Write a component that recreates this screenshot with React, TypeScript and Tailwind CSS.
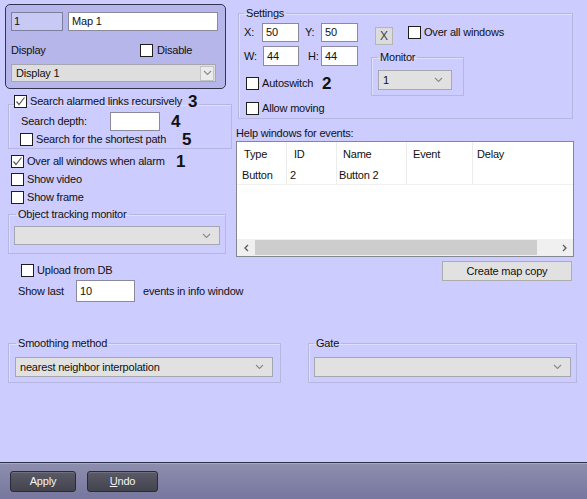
import * as React from "react";

const Chevron = () => (
    <svg width="9" height="6" viewBox="0 0 9 6" className="shrink-0">
        <polyline points="1,1 4.5,4.5 8,1" fill="none" stroke="#8a8a8a" strokeWidth="1.1" />
    </svg>
);

const Check = ({ checked }: { checked?: boolean }) => (
    <span className="w-[13px] h-[13px] border border-[#1e1e1e] bg-white flex items-center justify-center shrink-0">
        {checked && (
            <svg width="11" height="11" viewBox="0 0 11 11">
                <polyline points="1.5,5.5 4,8.5 9.5,1.5" fill="none" stroke="#5a5a5a" strokeWidth="1.2" />
            </svg>
        )}
    </span>
);

const CheckRow = ({
    label,
    checked,
    className = "",
    labelWidth,
    num,
}: {
    label: string;
    checked?: boolean;
    className?: string;
    labelWidth?: string;
    num?: string;
}) => (
    <div className={`flex items-center h-[13px] ${className}`}>
        <Check checked={checked} />
        <span className={`ml-[3px] leading-[13px] whitespace-nowrap shrink-0 ${labelWidth ?? ""}`}>{label}</span>
        {num && <span className="text-[17px] font-bold leading-[13px] tracking-normal shrink-0">{num}</span>}
    </div>
);

const Input = ({ value, className = "" }: { value?: string; className?: string }) => (
    <div className={`shrink-0 border border-[#8a8a9c] bg-white flex items-center pl-[3px] ${className}`}>{value}</div>
);

const Select = ({ value, className = "" }: { value?: string; className?: string }) => (
    <div className={`shrink-0 border border-[#a6a6b0] bg-[#e1e1e1] flex items-center justify-between pl-[4px] pr-[8px] ${className}`}>
        <span>{value}</span>
        <Chevron />
    </div>
);

const Group = ({
    title,
    className = "",
    legendClass = "",
    children,
}: {
    title: React.ReactNode;
    className?: string;
    legendClass?: string;
    children: React.ReactNode;
}) => (
    <fieldset className={`border border-[#b6b6e0] shadow-[inset_1px_1px_0_#dedeff] ${className}`}>
        <legend className={`px-[2px] leading-[13px] ${legendClass}`}>{title}</legend>
        {children}
    </fieldset>
);

const App = () => {
    return (
        <div className="w-[587px] h-[499px] bg-[#ccccff] flex flex-col overflow-hidden text-[11px] tracking-[-0.2px] text-[#111] font-['Liberation_Sans',Arial,sans-serif]">
            <div className="h-[462px] flex flex-col">
                <div className="flex">
                    {/* left column */}
                    <div className="w-[236px] shrink-0 flex flex-col">
                        <div className="ml-[5px] mt-[4px] w-[221px] h-[85px] rounded-[5px] border border-[#34344e] bg-[#b6b6ea] px-[5px] pt-[7px] flex flex-col">
                            <div className="flex gap-[5px]">
                                <div className="w-[52px] h-[19px] border border-[#7e7e9e] bg-[#c9c9f6] flex items-center pl-[2px]">1</div>
                                <Input value="Map 1" className="w-[150px] h-[19px]" />
                            </div>
                            <div className="mt-[13px] flex items-center h-[13px]">
                                <span className="w-[129px]">Display</span>
                                <Check />
                                <span className="ml-[4px]">Disable</span>
                            </div>
                            <div className="mt-[7px] w-[205px] h-[18px] border border-[#a6a6b0] bg-[#dedede] flex items-center justify-between pl-[4px] pr-[1px]">
                                <span>Display 1</span>
                                <span className="w-[14px] h-[15px] border border-[#c4c4c4] bg-[#ebebeb] flex items-center justify-center">
                                    <Chevron />
                                </span>
                            </div>
                        </div>

                        <fieldset className="mt-[6px] ml-[8px] w-[224px] border border-[#b6b6e0] shadow-[inset_1px_1px_0_#dedeff]">
                            <legend className="ml-[5px] h-[18px] px-0">
                                <CheckRow label="Search alarmed links recursively" checked labelWidth="w-[158px]" num="3" className="pr-[2px]" />
                            </legend>
                            <div className="-mt-[1px] pl-[12px] pb-[2px] flex flex-col">
                                <div className="flex items-center h-[19px]">
                                    <span className="w-[89px] shrink-0">Search depth:</span>
                                    <Input className="w-[50px] h-[19px]" />
                                    <span className="ml-[11px] text-[17px] font-bold leading-[13px] tracking-normal">4</span>
                                </div>
                                <CheckRow label="Search for the shortest path" labelWidth="w-[146px]" num="5" className="mt-[2px] -ml-[1px]" />
                            </div>
                        </fieldset>

                        <CheckRow label="Over all windows when alarm" checked labelWidth="w-[149px]" num="1" className="mt-[6px] ml-[11px]" />
                        <CheckRow label="Show video" className="mt-[5px] ml-[11px]" />
                        <CheckRow label="Show frame" className="mt-[5px] ml-[11px]" />

                        <Group title="Object tracking monitor" className="mt-[4px] ml-[8px] w-[218px]" legendClass="ml-[7px]">
                            <div className="mt-[5px] px-[5px] pb-[8px]">
                                <Select className="w-[206px] h-[19px]" />
                            </div>
                        </Group>

                        <CheckRow label="Upload from DB" className="mt-[10px] ml-[21px]" />
                        <div className="mt-[3px] ml-[18px] flex items-center h-[22px]">
                            <span className="w-[58px] shrink-0">Show last</span>
                            <Input value="10" className="w-[59px] h-[22px]" />
                            <span className="ml-[8px] whitespace-nowrap shrink-0">events in info window</span>
                        </div>
                    </div>

                    {/* right column */}
                    <div className="w-[339px] flex flex-col">
                        <Group title="Settings" className="mt-[7px] ml-[2px] w-[335px]" legendClass="ml-[5px]">
                            <div className="mt-[3px] flex">
                                <div className="w-[132px] pl-[5px] flex flex-col">
                                    <div className="flex items-center h-[19px]">
                                        <span className="w-[18px] shrink-0">X:</span>
                                        <Input value="50" className="w-[37px] h-[19px]" />
                                        <span className="ml-[6px] w-[16px] shrink-0">Y:</span>
                                        <Input value="50" className="w-[37px] h-[19px]" />
                                    </div>
                                    <div className="mt-[4px] flex items-center h-[20px]">
                                        <span className="w-[19px] shrink-0">W:</span>
                                        <Input value="44" className="w-[36px] h-[20px]" />
                                        <span className="ml-[9px] w-[13px] shrink-0">H:</span>
                                        <Input value="44" className="w-[37px] h-[20px]" />
                                    </div>
                                    <CheckRow label="Autoswitch" labelWidth="w-[60px]" num="2" className="mt-[11px] ml-[2px]" />
                                    <CheckRow label="Allow moving" className="mt-[12px] ml-[2px]" />
                                    <div className="h-[3px]" />
                                </div>
                                <div className="flex flex-col">
                                    <div className="flex items-start">
                                        <div className="mt-[4px] ml-[4px] w-[18px] h-[18px] border border-[#b4b4b4] bg-[#dcdcdc] flex items-center justify-center text-[#444] text-[12px]">
                                            X
                                        </div>
                                        <CheckRow label="Over all windows" className="mt-[3px] ml-[15px]" />
                                    </div>
                                    <Group title="Monitor" className="mt-[6px] w-[93px]" legendClass="ml-[6px]">
                                        <div className="mt-[6px] px-[6px] pb-[5px]">
                                            <Select value="1" className="w-[74px] h-[20px]" />
                                        </div>
                                    </Group>
                                </div>
                            </div>
                        </Group>

                        <div className="mt-[8px] leading-[13px]">Help windows for events:</div>
                        <div className="mt-[1px] w-[338px] h-[116px] border border-[#828790] bg-white flex flex-col">
                            <div className="flex h-[24px]">
                                <div className="w-[50px] pl-[7px] flex items-center border-r border-[#ececec]">Type</div>
                                <div className="w-[50px] pl-[7px] flex items-center border-r border-[#ececec]">ID</div>
                                <div className="w-[70px] pl-[6px] flex items-center border-r border-[#ececec]">Name</div>
                                <div className="w-[66px] pl-[6px] flex items-center border-r border-[#ececec]">Event</div>
                                <div className="flex-1 pl-[4px] flex items-center">Delay</div>
                            </div>
                            <div className="flex h-[19px] border-b border-[#f0f0f0]">
                                <div className="w-[50px] pl-[5px] flex items-center border-r border-[#ececec]">Button</div>
                                <div className="w-[50px] pl-[3px] flex items-center border-r border-[#ececec]">2</div>
                                <div className="w-[70px] pl-[2px] flex items-center border-r border-[#ececec]">Button 2</div>
                                <div className="w-[66px] border-r border-[#ececec]" />
                                <div className="flex-1" />
                            </div>
                            <div className="flex-1" />
                            <div className="h-[17px] bg-[#f0f0f0] flex items-center">
                                <div className="w-[17px] h-[17px] flex items-center justify-center">
                                    <svg width="6" height="8" viewBox="0 0 6 8">
                                        <polyline points="5,1 2,4 5,7" fill="none" stroke="#606060" strokeWidth="1.4" />
                                    </svg>
                                </div>
                                <div className="ml-[1px] w-[282px] h-[15px] bg-[#cdcdcd]" />
                                <div className="flex-1" />
                                <div className="w-[17px] h-[17px] flex items-center justify-center">
                                    <svg width="6" height="8" viewBox="0 0 6 8">
                                        <polyline points="1,1 4,4 1,7" fill="none" stroke="#606060" strokeWidth="1.4" />
                                    </svg>
                                </div>
                            </div>
                        </div>
                        <div className="mt-[4px] self-end mr-[3px] w-[130px] h-[20px] border border-[#adadad] bg-[#e1e1e1] flex items-center justify-center">
                            Create map copy
                        </div>
                    </div>
                </div>

                <div className="mt-[35px] flex">
                    <Group title="Smoothing method" className="ml-[8px] w-[273px]" legendClass="ml-[7px]">
                        <div className="mt-[7px] px-[6px] pb-[5px]">
                            <Select value="nearest neighbor interpolation" className="w-[258px] h-[20px]" />
                        </div>
                    </Group>
                    <Group title="Gate" className="ml-[27px] w-[268px]" legendClass="ml-[5px]">
                        <div className="mt-[7px] px-[5px] pb-[5px]">
                            <Select className="w-[257px] h-[20px]" />
                        </div>
                    </Group>
                </div>
            </div>

            <div className="h-[37px] border-t border-[#2e2e48] shadow-[inset_0_1px_0_#a8a8c4] bg-linear-to-b from-[#8e8eae] to-[#77779f] flex items-start pl-[10px] pt-[8px]">
                <div className="w-[66px] h-[21px] rounded-[3px] border border-[#2a2a38] bg-linear-to-b from-[#5a5a68] to-[#44444f] shadow-[inset_0_1px_0_#70707e] text-[#f4f4f4] flex items-center justify-center">
                    Apply
                </div>
                <div className="ml-[11px] w-[71px] h-[21px] rounded-[3px] border border-[#2a2a38] bg-linear-to-b from-[#5a5a68] to-[#44444f] shadow-[inset_0_1px_0_#70707e] text-[#f4f4f4] flex items-center justify-center">
                    <span>
                        <span className="underline">U</span>ndo
                    </span>
                </div>
            </div>
        </div>
    );
};

export default App;
